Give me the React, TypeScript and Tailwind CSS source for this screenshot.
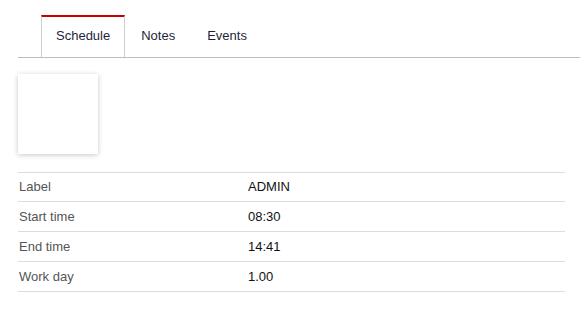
import { FC } from "react";

const tabs = ["Schedule", "Notes", "Events"];

const rows: [string, string][] = [
  ["Label", "ADMIN"],
  ["Start time", "08:30"],
  ["End time", "14:41"],
  ["Work day", "1.00"],
];

const App: FC = () => {
  return (
    <div
      className="w-[580px] h-[323px] bg-white overflow-hidden pt-[15px] text-[13px]"
      style={{ fontFamily: '"Liberation Sans", Arial, sans-serif' }}
    >
      {/* Tab bar */}
      <div className="ml-[18px] flex pl-[23px] border-b border-[#bdbdbd] h-[43px]">
        {tabs.map((tab, i) => (
          <div
            key={tab}
            className={
              i === 0
                ? "h-[42px] flex items-center px-[14px] border-x border-[#cfcfcf] border-t-2 border-t-[#cc0000] text-[#1f1f3a] pb-[3px]"
                : "h-[42px] flex items-center px-[15px] border-x border-transparent border-t-2 border-t-transparent text-[#1f1f3a] pb-[3px]"
            }
          >
            {tab}
          </div>
        ))}
      </div>

      {/* Image placeholder */}
      <div className="ml-[18px] mt-[16px] w-[80px] h-[80px] bg-white shadow-[0_1px_5px_rgba(0,0,0,0.22)]" />

      {/* Details */}
      <div className="ml-[18px] mr-[15px] mt-[18px] border-b border-[#dcdcdc]">
        {rows.map(([label, value], i) => (
          <div
            key={label}
            className={
              i === 0
                ? "flex items-center border-t border-[#dcdcdc] h-[29px]"
                : "flex items-center border-t border-[#dcdcdc] h-[30px]"
            }
          >
            <div className="w-[230px] pl-[1px] text-[#555555]">{label}</div>
            <div className="text-[#111111]">{value}</div>
          </div>
        ))}
      </div>
    </div>
  );
};

export default App;
